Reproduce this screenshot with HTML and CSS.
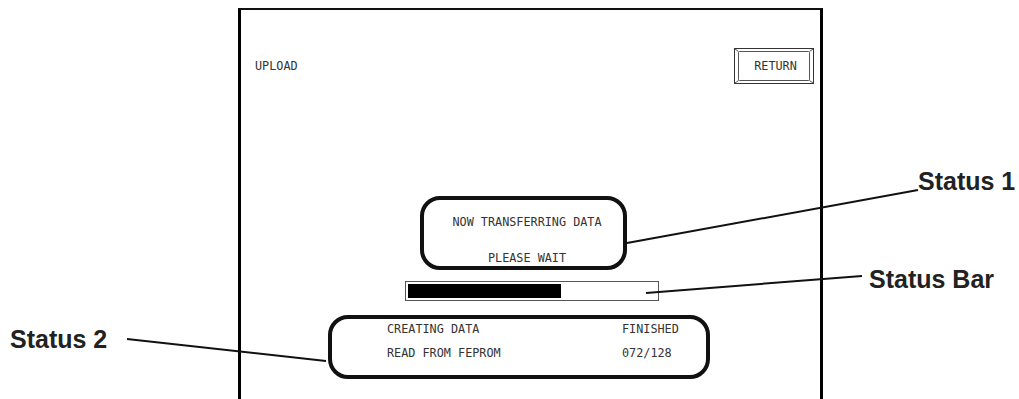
FILE: index.html
```html
<!DOCTYPE html>
<html lang="en">
<head>
  <meta charset="UTF-8" />
  <title>Upload - Status Screen</title>
  <link rel="stylesheet" href="styles.css">
</head>
<body>
  <div class="page">
    <div class="screen">
      <div class="screen-head">
        <span class="mono">UPLOAD</span>
        <div class="btn">
          <svg class="btn-frame" width="80" height="36" viewBox="0 0 80 36">
            <rect x="0.5" y="0.5" width="79" height="35" fill="none" stroke="#333" />
            <rect x="4.5" y="3.5" width="71" height="29" rx="1" fill="none" stroke="#555" />
            <path d="M1 1 L4.5 3.5 M79 1 L75.5 3.5 M1 35 L4.5 32.5 M79 35 L75.5 32.5" stroke="#555" />
          </svg>
          <span class="mono">RETURN</span>
        </div>
      </div>

      <div class="status1 mono">
        <div>NOW TRANSFERRING DATA</div>
        <div>PLEASE WAIT</div>
      </div>

      <div class="bar">
        <div class="bar-fill" style="width: 61.5%"></div>
      </div>

      <div class="status2 mono">
        <div>CREATING DATA</div>
        <div>FINISHED</div>
        <div>READ FROM FEPROM</div>
        <div>072/128</div>
      </div>
    </div>

    <!-- callout lines -->
    <svg class="leaders" width="1019" height="399" viewBox="0 0 1019 399">
      <path d="M627 235 L918 182" />
      <path d="M646 285 L862 268" />
      <path d="M127 331 L326 353" />
    </svg>

    <div class="label label-s1">Status 1</div>
    <div class="label label-bar">Status Bar</div>
    <div class="label label-s2">Status 2</div>
  </div>
</body>
</html>
```

FILE: styles.css
```css
body {
  margin: 0;
  background: #fff;
  overflow: hidden;
}
.page {
  position: relative;
  width: 1019px;
  height: 399px;
}
.mono {
  font-family: "DejaVu Sans Mono", "Liberation Mono", monospace;
  font-size: 11.8px;
  line-height: 14px;
  color: #333;
}
.screen {
  box-sizing: border-box;
  margin: 8px 0 0 238px;
  width: 585px;
  height: 391px;
  border-left: 3px solid #000;
  border-right: 3px solid #000;
  border-top: 2px solid #111;
}
.screen-head {
  display: flex;
  justify-content: space-between;
  align-items: center;
  padding: 38px 6px 0 14px;
}
.btn {
  position: relative;
  width: 80px;
  height: 36px;
  display: flex;
  align-items: center;
  justify-content: center;
}
.btn-frame {
  position: absolute;
  left: 0;
  top: 0;
}
.btn .mono {
  position: relative;
  padding-left: 3px;
}
.status1 {
  box-sizing: border-box;
  margin: 112px 0 0 179px;
  width: 207px;
  height: 74px;
  border: 4px solid #111;
  border-radius: 20px;
  padding: 15px 0 0 7px;
  display: flex;
  flex-direction: column;
  align-items: center;
  gap: 22px;
}
.bar {
  box-sizing: border-box;
  margin: 11px 0 0 164px;
  width: 254px;
  height: 20px;
  border: 1px solid #555;
  padding: 2px;
}
.bar-fill {
  height: 14px;
  background: #000;
}
.status2 {
  box-sizing: border-box;
  margin: 14px 0 0 87px;
  width: 382px;
  height: 64px;
  border: 4px solid #111;
  border-radius: 20px;
  padding: 3px 0 0 55px;
  display: grid;
  grid-template-columns: 235px auto;
  grid-auto-rows: 14px;
  row-gap: 10px;
}
.leaders {
  position: absolute;
  left: 0;
  top: 0;
  pointer-events: none;
}
.leaders path {
  stroke: #111;
  stroke-width: 2;
  fill: none;
}
.label {
  position: absolute;
  font-family: "Liberation Sans", Arial, sans-serif;
  font-weight: bold;
  font-size: 25px;
  line-height: 25px;
  color: #222;
  white-space: nowrap;
}
.label-s1 {
  left: 918px;
  top: 161px;
}
.label-bar {
  left: 869px;
  top: 259px;
}
.label-s2 {
  left: 10px;
  top: 319px;
}
```
